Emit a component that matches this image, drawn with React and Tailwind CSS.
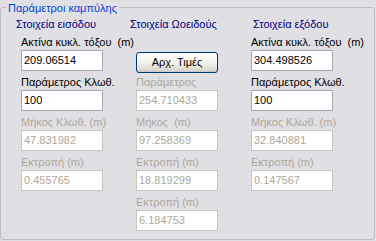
// Παράμετροι καμπύλης — XP style group box with three columns
const font = { fontFamily: '"Liberation Sans", Arial, sans-serif' }

function Field({ label, value, disabled }) {
    return (
        <div className="flex flex-col">
            <div className={`h-[13px] leading-[13px] mb-[1px] whitespace-pre ${disabled ? 'text-[#aca899]' : 'text-black'}`}>
                {label}
            </div>
            <div
                className={`w-[82px] h-[21px] flex items-center pl-[2px] bg-white border ${
                    disabled ? 'border-[#c9c7ba] text-[#aca899]' : 'border-[#a0a8b4] text-black'
                }`}
            >
                {value}
            </div>
        </div>
    )
}

function App() {
    return (
        <div className="w-[376px] h-[241px] bg-[#e0dfe3] text-[11px] pt-[7px] overflow-hidden" style={font}>
            {/* Group box */}
            <div className="relative w-[375px] h-[233px] border border-[#bdbdbd] rounded-[3px]">
                <div className="absolute -top-[6px] left-[5px] px-[2px] bg-[#e0dfe3] leading-[13px] text-[#0046d5]">
                    Παράμετροι καμπύλης
                </div>

                <div className="flex pl-[15px] pt-[10px]">
                    {/* Στοιχεία εισόδου */}
                    <div className="w-[114px] flex flex-col">
                        <div className="h-[13px] leading-[13px] text-[#000080]">Στοιχεία εισόδου</div>
                        <div className="pl-[5px] pt-[5px] flex flex-col gap-[5px]">
                            <Field label="Ακτίνα κυκλ. τόξου  (m)" value="209.06514" />
                            <Field label="Παράμετρος Κλωθ." value="100" />
                            <Field label="Μήκος Κλωθ. (m)" value="47.831982" disabled />
                            <Field label="Εκτροπή (m)" value="0.455765" disabled />
                        </div>
                    </div>

                    {/* Στοιχεία Ωοειδούς */}
                    <div className="w-[121px] flex flex-col">
                        <div className="h-[13px] leading-[13px] text-[#000080]">Στοιχεία Ωοειδούς</div>
                        <div className="pl-[6px] pt-[5px] flex flex-col gap-[5px]">
                            <div className="h-[35px] pt-[16px]">
                                <button className="w-[82px] h-[21px] rounded-[3px] border border-[#003c74] bg-gradient-to-b from-white via-[#f4f3ee] to-[#d6d0c5] text-black leading-none shadow-[inset_0_-1px_0_#c1ccd1]">
                                    Αρχ. Τιμές
                                </button>
                            </div>
                            <Field label="Παράμετρος" value="254.710433" disabled />
                            <Field label="Μήκος  (m)" value="97.258369" disabled />
                            <Field label="Εκτροπή (m)" value="18.819299" disabled />
                            <Field label="Εκτροπή (m)" value="6.184753" disabled />
                        </div>
                    </div>

                    {/* Στοιχεία εξόδου */}
                    <div className="flex flex-col">
                        <div className="h-[13px] leading-[13px] pl-[2px] text-[#000080]">Στοιχεία εξόδου</div>
                        <div className="pt-[5px] flex flex-col gap-[5px]">
                            <Field label="Ακτίνα κυκλ. τόξου  (m)" value="304.498526" />
                            <Field label="Παράμετρος Κλωθ." value="100" />
                            <Field label="Μήκος Κλωθ. (m)" value="32.840881" disabled />
                            <Field label="Εκτροπή (m)" value="0.147567" disabled />
                        </div>
                    </div>
                </div>
            </div>
        </div>
    )
}

export default App
